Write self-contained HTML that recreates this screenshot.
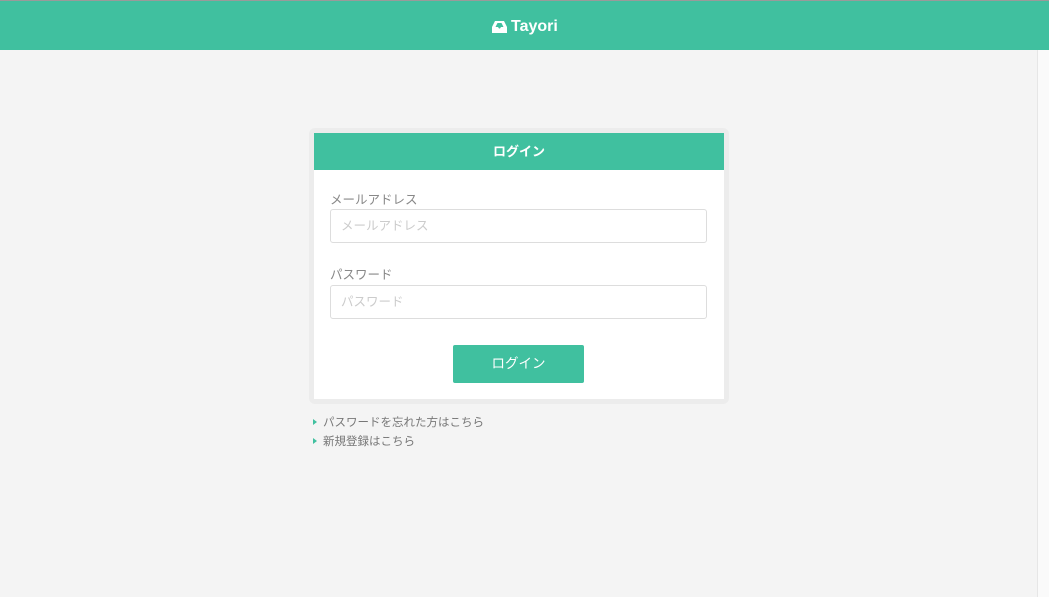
<!DOCTYPE html>
<html><head><meta charset="utf-8"><style>
*{box-sizing:border-box;margin:0;padding:0}
body{width:1049px;height:597px;background:#f4f4f4;font-family:"Liberation Sans","Noto Sans CJK JP",sans-serif;position:relative;overflow:hidden}
.top{position:absolute;left:0;top:0;width:1049px;height:50px;background:#40c09f;border-top:1px solid #9a9a9a}
.logo{position:absolute;left:492px;top:17px;color:#fff;font-size:16px;font-weight:bold;display:flex;align-items:center;gap:4px}
.sb{position:absolute;left:1037px;top:50px;width:12px;height:547px;background:#fafafa;border-left:1px solid #e6e6e6}
.wrap{position:absolute;left:309px;top:128px;width:420px;height:276px;background:#ececec;border-radius:6px}
.card{position:absolute;left:314px;top:133px;width:410px;height:266px;background:#fff}
.ch{height:37px;background:#40c09f;color:#fff;font-weight:bold;font-size:13px;text-align:center;line-height:38px}
.lbl{position:absolute;left:16px;font-size:12.5px;color:#888}
.inp{position:absolute;left:16px;width:377px;height:34px;border:1px solid #ddd;border-radius:3px;font-size:12.5px;color:#ccc;padding-left:10px;line-height:33px}
.btn{position:absolute;left:139px;top:212px;width:131px;height:38px;background:#40c09f;border-radius:2px;color:#fff;font-size:13.5px;text-align:center;line-height:38px}
.lk{position:absolute;left:313px;font-size:11.5px;color:#777}
.lk:before{content:"";display:inline-block;border-left:4px solid #40c09f;border-top:3.5px solid transparent;border-bottom:3.5px solid transparent;margin-right:6px;vertical-align:1px}
</style></head><body>
<div class="top"><div class="logo"><svg width="15" height="14" viewBox="0 0 15 14"><path d="M3 1h9l3 6v6H0V7z" fill="#fff"/><path d="M3.5 7h2.5l1 1.5h1l1-1.5h2.5l-2-4h-4z" fill="#40c09f"/></svg>Tayori</div></div>
<div class="sb"></div>
<div class="wrap"></div>
<div class="card">
<div class="ch">ログイン</div>
<div class="lbl" style="top:56px">メールアドレス</div>
<div class="inp" style="top:76px">メールアドレス</div>
<div class="lbl" style="top:131px">パスワード</div>
<div class="inp" style="top:152px">パスワード</div>
<div class="btn">ログイン</div>
</div>
<div class="lk" style="top:414px">パスワードを忘れた方はこちら</div>
<div class="lk" style="top:433px">新規登録はこちら</div>
</body></html>
